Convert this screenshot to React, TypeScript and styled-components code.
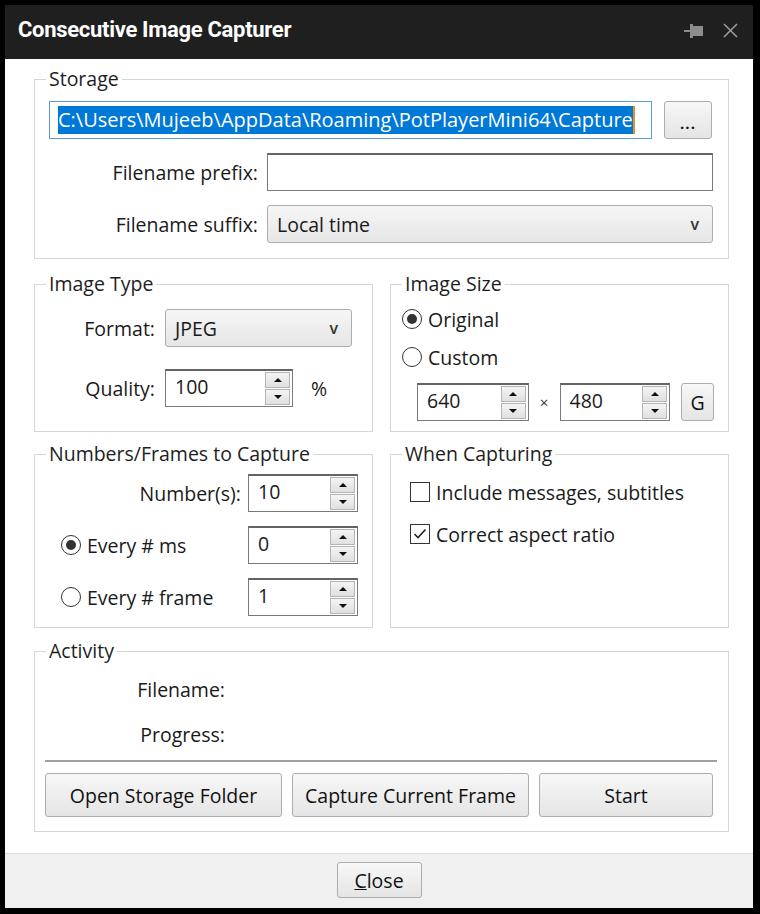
import React from "react";
import styled, { createGlobalStyle } from "styled-components";

const FS = 19.5;

const Global = createGlobalStyle`
  html, body { margin: 0; padding: 0; background: #000; }
  body { font-family: "Segoe UI", "Open Sans", "Noto Sans", sans-serif; color: #1a1a1a; }
  * { box-sizing: border-box; }
`;

const Frame = styled.div`
  width: 760px;
  height: 914px;
  background: #000;
  padding: 5px 7px 6px 5px;
  display: flex;
  flex-direction: column;
`;

const TitleBar = styled.div`
  height: 54px;
  background: #1f1f1f;
  display: flex;
  align-items: center;
  justify-content: space-between;
  padding: 0 15px 5px 13px;
`;

const Title = styled.div`
  font-family: "Roboto", "Open Sans", sans-serif;
  font-weight: 700;
  font-size: 22px;
  color: #fff;
  letter-spacing: -0.3px;
`;

const TitleIcons = styled.div`
  display: flex;
  align-items: center;
  gap: 19px;
  padding-top: 2px;
`;

const Content = styled.div`
  flex: 1;
  background: #fff;
  padding: 8px 24px 0 29px;
  display: flex;
  flex-direction: column;
`;

const Footer = styled.div`
  height: 55px;
  border-top: 1px solid #dcdcdc;
  background: #f0f0f0;
  display: flex;
  align-items: center;
  justify-content: center;
  padding-bottom: 2px;
`;

const Group = styled.fieldset<{ $mt?: number }>`
  margin: ${(p) => p.$mt ?? 0}px 0 0 0;
  padding: 0;
  min-width: 0;
  border: 1px solid #d6d6d6;
`;

const Legend = styled.legend`
  margin-left: 11px;
  padding: 0 3px;
  font-size: ${FS}px;
  line-height: 24px;
  color: #1e1e1e;
`;

const Body = styled.div<{ $pad: string }>`
  padding: ${(p) => p.$pad};
`;

const StorageBody = styled(Body)`
  display: flex;
  flex-direction: column;
  gap: 14px;
`;

const PathRow = styled.div`
  display: flex;
  gap: 12px;
  padding-right: 1px;
`;

const PathBox = styled.div`
  flex: 1;
  height: 38px;
  border: 1px solid #5f9ae0;
  padding-left: 8px;
  display: flex;
  align-items: center;
  background: #fff;
`;

const Selected = styled.span`
  background: #0078d7;
  color: #fff;
  font-size: 20px;
  line-height: 28px;
  white-space: nowrap;
  border-right: 2px solid #f08a24;
`;

const FieldRow = styled.div<{ $label: number }>`
  display: grid;
  grid-template-columns: ${(p) => p.$label}px 1fr;
  column-gap: 9px;
  align-items: center;
`;

const Label = styled.span`
  font-size: ${FS}px;
  justify-self: end;
  white-space: nowrap;
`;

const TextBox = styled.div`
  height: 38px;
  border: 1px solid #7a7a7a;
  border-top: 2px solid #646464;
  background: #fff;
`;

const Select = styled.div<{ $w?: number }>`
  height: 38px;
  width: ${(p) => (p.$w ? `${p.$w}px` : "auto")};
  border: 1px solid #adadad;
  border-radius: 3px;
  background: linear-gradient(#f6f6f6, #e6e6e6);
  display: flex;
  align-items: center;
  justify-content: space-between;
  padding: 0 13px 0 9px;
  font-size: ${FS}px;
`;

const Arrow = styled.span`
  font-size: 16px;
  font-weight: 600;
  color: #333;
`;

const PushButton = styled.button<{ $w?: number; $h?: number }>`
  height: ${(p) => p.$h ?? 38}px;
  width: ${(p) => (p.$w ? `${p.$w}px` : "auto")};
  border: 1px solid #adadad;
  border-radius: 3px;
  background: linear-gradient(#f7f7f7, #e5e5e5);
  font-family: inherit;
  font-size: ${FS}px;
  color: #111;
  padding: 0;
  display: flex;
  align-items: center;
  justify-content: center;
  white-space: nowrap;
`;

const Dots = styled.span`
  font-weight: 700;
  font-size: 15px;
  letter-spacing: 1px;
  padding-top: 6px;
`;

const MidGrid = styled.div`
  display: grid;
  grid-template-columns: 1fr 1fr;
  column-gap: 17px;
  row-gap: 10px;
  margin-top: 13px;
`;

const TypeBody = styled(Body)`
  display: grid;
  grid-template-columns: 106px 1fr;
  column-gap: 10px;
  row-gap: 22px;
  align-items: center;
`;

const Inline = styled.div`
  display: flex;
  align-items: center;
`;

const Percent = styled.span`
  font-size: ${FS}px;
  margin-left: 18px;
`;

const SpinBox = styled.div<{ $w: number }>`
  width: ${(p) => p.$w}px;
  height: 38px;
  display: flex;
  border: 1px solid #7a7a7a;
  border-top: 2px solid #646464;
  background: #fff;
`;

const SpinValue = styled.span`
  flex: 1;
  padding-left: 9px;
  font-size: ${FS}px;
  line-height: 32px;
`;

const SpinButtons = styled.div`
  width: 27px;
  display: flex;
  flex-direction: column;
  gap: 1px;
  padding: 1px 2px 1px 0;
`;

const SpinBtn = styled.div<{ $down?: boolean }>`
  flex: 1;
  border: 1px solid #b4b4b4;
  background: linear-gradient(#f4f4f4, #e0e0e0);
  display: flex;
  align-items: center;
  justify-content: center;
  &::after {
    content: "";
    width: 0;
    height: 0;
    border-left: 4px solid transparent;
    border-right: 4px solid transparent;
    ${(p) => (p.$down ? "border-top: 4px solid #111;" : "border-bottom: 4px solid #111;")}
  }
`;

const SizeBody = styled(Body)`
  display: flex;
  flex-direction: column;
  gap: 10px;
`;

const OptionRow = styled.label`
  display: flex;
  align-items: center;
  gap: 6px;
  height: 28px;
  font-size: ${FS}px;
  white-space: nowrap;
`;

const RadioMark = styled.span<{ $on?: boolean }>`
  width: 20px;
  height: 20px;
  border-radius: 50%;
  border: 1.5px solid #333;
  display: flex;
  align-items: center;
  justify-content: center;
  flex: none;
  &::after {
    content: "";
    width: 10px;
    height: 10px;
    border-radius: 50%;
    background: #333;
    display: ${(p) => (p.$on ? "block" : "none")};
  }
`;

const CheckMark = styled.span`
  width: 20px;
  height: 20px;
  border: 1.5px solid #333;
  display: flex;
  align-items: center;
  justify-content: center;
  flex: none;
`;

const SizeRow = styled.div`
  display: flex;
  align-items: center;
  gap: 11px;
  margin-top: 2px;
  margin-left: 15px;
`;

const Times = styled.span`
  width: 9px;
  font-size: 15px;
  text-align: center;
  color: #333;
`;

const NumBody = styled(Body)`
  display: grid;
  grid-template-columns: 1fr 110px;
  column-gap: 7px;
  row-gap: 14px;
  align-items: center;
`;

const CaptBody = styled(Body)`
  display: flex;
  flex-direction: column;
  gap: 14px;
`;

const ActBody = styled(Body)`
  display: flex;
  flex-direction: column;
`;

const InfoRow = styled.div<{ $mt?: number }>`
  display: grid;
  grid-template-columns: 180px 1fr;
  height: 28px;
  align-items: center;
  margin-top: ${(p) => p.$mt ?? 0}px;
`;

const Separator = styled.div`
  height: 2px;
  background: #a0a0a0;
  margin: 12px 0 11px;
`;

const ActionRow = styled.div`
  display: grid;
  grid-template-columns: 237px 237px 1fr;
  column-gap: 10px;
  margin-right: 4px;
`;

const Spin = ({ w, value }: { w: number; value: string }) => (
  <SpinBox $w={w}>
    <SpinValue>{value}</SpinValue>
    <SpinButtons>
      <SpinBtn />
      <SpinBtn $down />
    </SpinButtons>
  </SpinBox>
);

const PinIcon = () => (
  <svg width="20" height="16" viewBox="0 0 20 16">
    <line x1="0" y1="8" x2="6" y2="8" stroke="#8c8c8c" strokeWidth="2" />
    <rect x="6" y="1" width="3" height="14" fill="#8c8c8c" />
    <rect x="9" y="3" width="10" height="10" fill="#8c8c8c" />
  </svg>
);

const CloseIcon = () => (
  <svg width="15" height="15" viewBox="0 0 15 15">
    <path d="M1 1 L14 14 M14 1 L1 14" stroke="#9a9a9a" strokeWidth="1.6" fill="none" />
  </svg>
);

const CheckIcon = () => (
  <svg width="14" height="12" viewBox="0 0 14 12">
    <path d="M1.5 6 L5 9.5 L12.5 1.5" stroke="#222" strokeWidth="1.6" fill="none" />
  </svg>
);

export default function App() {
  return (
    <>
      <Global />
      <Frame>
        <TitleBar>
          <Title>Consecutive Image Capturer</Title>
          <TitleIcons>
            <PinIcon />
            <CloseIcon />
          </TitleIcons>
        </TitleBar>
        <Content>
          <Group>
            <Legend>Storage</Legend>
            <StorageBody $pad="10px 15px 15px 14px">
              <PathRow>
                <PathBox>
                  <Selected>C:\Users\Mujeeb\AppData\Roaming\PotPlayerMini64\Capture</Selected>
                </PathBox>
                <PushButton $w={48}>
                  <Dots>...</Dots>
                </PushButton>
              </PathRow>
              <FieldRow $label={209}>
                <Label>Filename prefix:</Label>
                <TextBox />
              </FieldRow>
              <FieldRow $label={209}>
                <Label>Filename suffix:</Label>
                <Select>
                  <span>Local time</span>
                  <Arrow>v</Arrow>
                </Select>
              </FieldRow>
            </StorageBody>
          </Group>

          <MidGrid>
            <Group>
              <Legend>Image Type</Legend>
              <TypeBody $pad="13px 20px 24px 14px">
                <Label>Format:</Label>
                <Select $w={187}>
                  <span>JPEG</span>
                  <Arrow>v</Arrow>
                </Select>
                <Label>Quality:</Label>
                <Inline>
                  <Spin w={128} value="100" />
                  <Percent>%</Percent>
                </Inline>
              </TypeBody>
            </Group>

            <Group>
              <Legend>Image Size</Legend>
              <SizeBody $pad="9px 14px 10px 11px">
                <OptionRow>
                  <RadioMark $on />
                  Original
                </OptionRow>
                <OptionRow>
                  <RadioMark />
                  Custom
                </OptionRow>
                <SizeRow>
                  <Spin w={112} value="640" />
                  <Times>×</Times>
                  <Spin w={111} value="480" />
                  <PushButton $w={33}>G</PushButton>
                </SizeRow>
              </SizeBody>
            </Group>

            <Group>
              <Legend>Numbers/Frames to Capture</Legend>
              <NumBody $pad="8px 14px 11px 26px">
                <Label>Number(s):</Label>
                <Spin w={110} value="10" />
                <OptionRow>
                  <RadioMark $on />
                  Every # ms
                </OptionRow>
                <Spin w={110} value="0" />
                <OptionRow>
                  <RadioMark />
                  Every # frame
                </OptionRow>
                <Spin w={110} value="1" />
              </NumBody>
            </Group>

            <Group>
              <Legend>When Capturing</Legend>
              <CaptBody $pad="12px 14px 0 19px">
                <OptionRow>
                  <CheckMark />
                  Include messages, subtitles
                </OptionRow>
                <OptionRow>
                  <CheckMark>
                    <CheckIcon />
                  </CheckMark>
                  Correct aspect ratio
                </OptionRow>
              </CaptBody>
            </Group>
          </MidGrid>

          <Group $mt={11}>
            <Legend>Activity</Legend>
            <ActBody $pad="12px 11px 14px 10px">
              <InfoRow>
                <Label>Filename:</Label>
                <span />
              </InfoRow>
              <InfoRow $mt={17}>
                <Label>Progress:</Label>
                <span />
              </InfoRow>
              <Separator />
              <ActionRow>
                <PushButton $h={44}>Open Storage Folder</PushButton>
                <PushButton $h={44}>Capture Current Frame</PushButton>
                <PushButton $h={44}>Start</PushButton>
              </ActionRow>
            </ActBody>
          </Group>
        </Content>
        <Footer>
          <PushButton $w={85} $h={36}>
            <u>C</u>lose
          </PushButton>
        </Footer>
      </Frame>
    </>
  );
}
